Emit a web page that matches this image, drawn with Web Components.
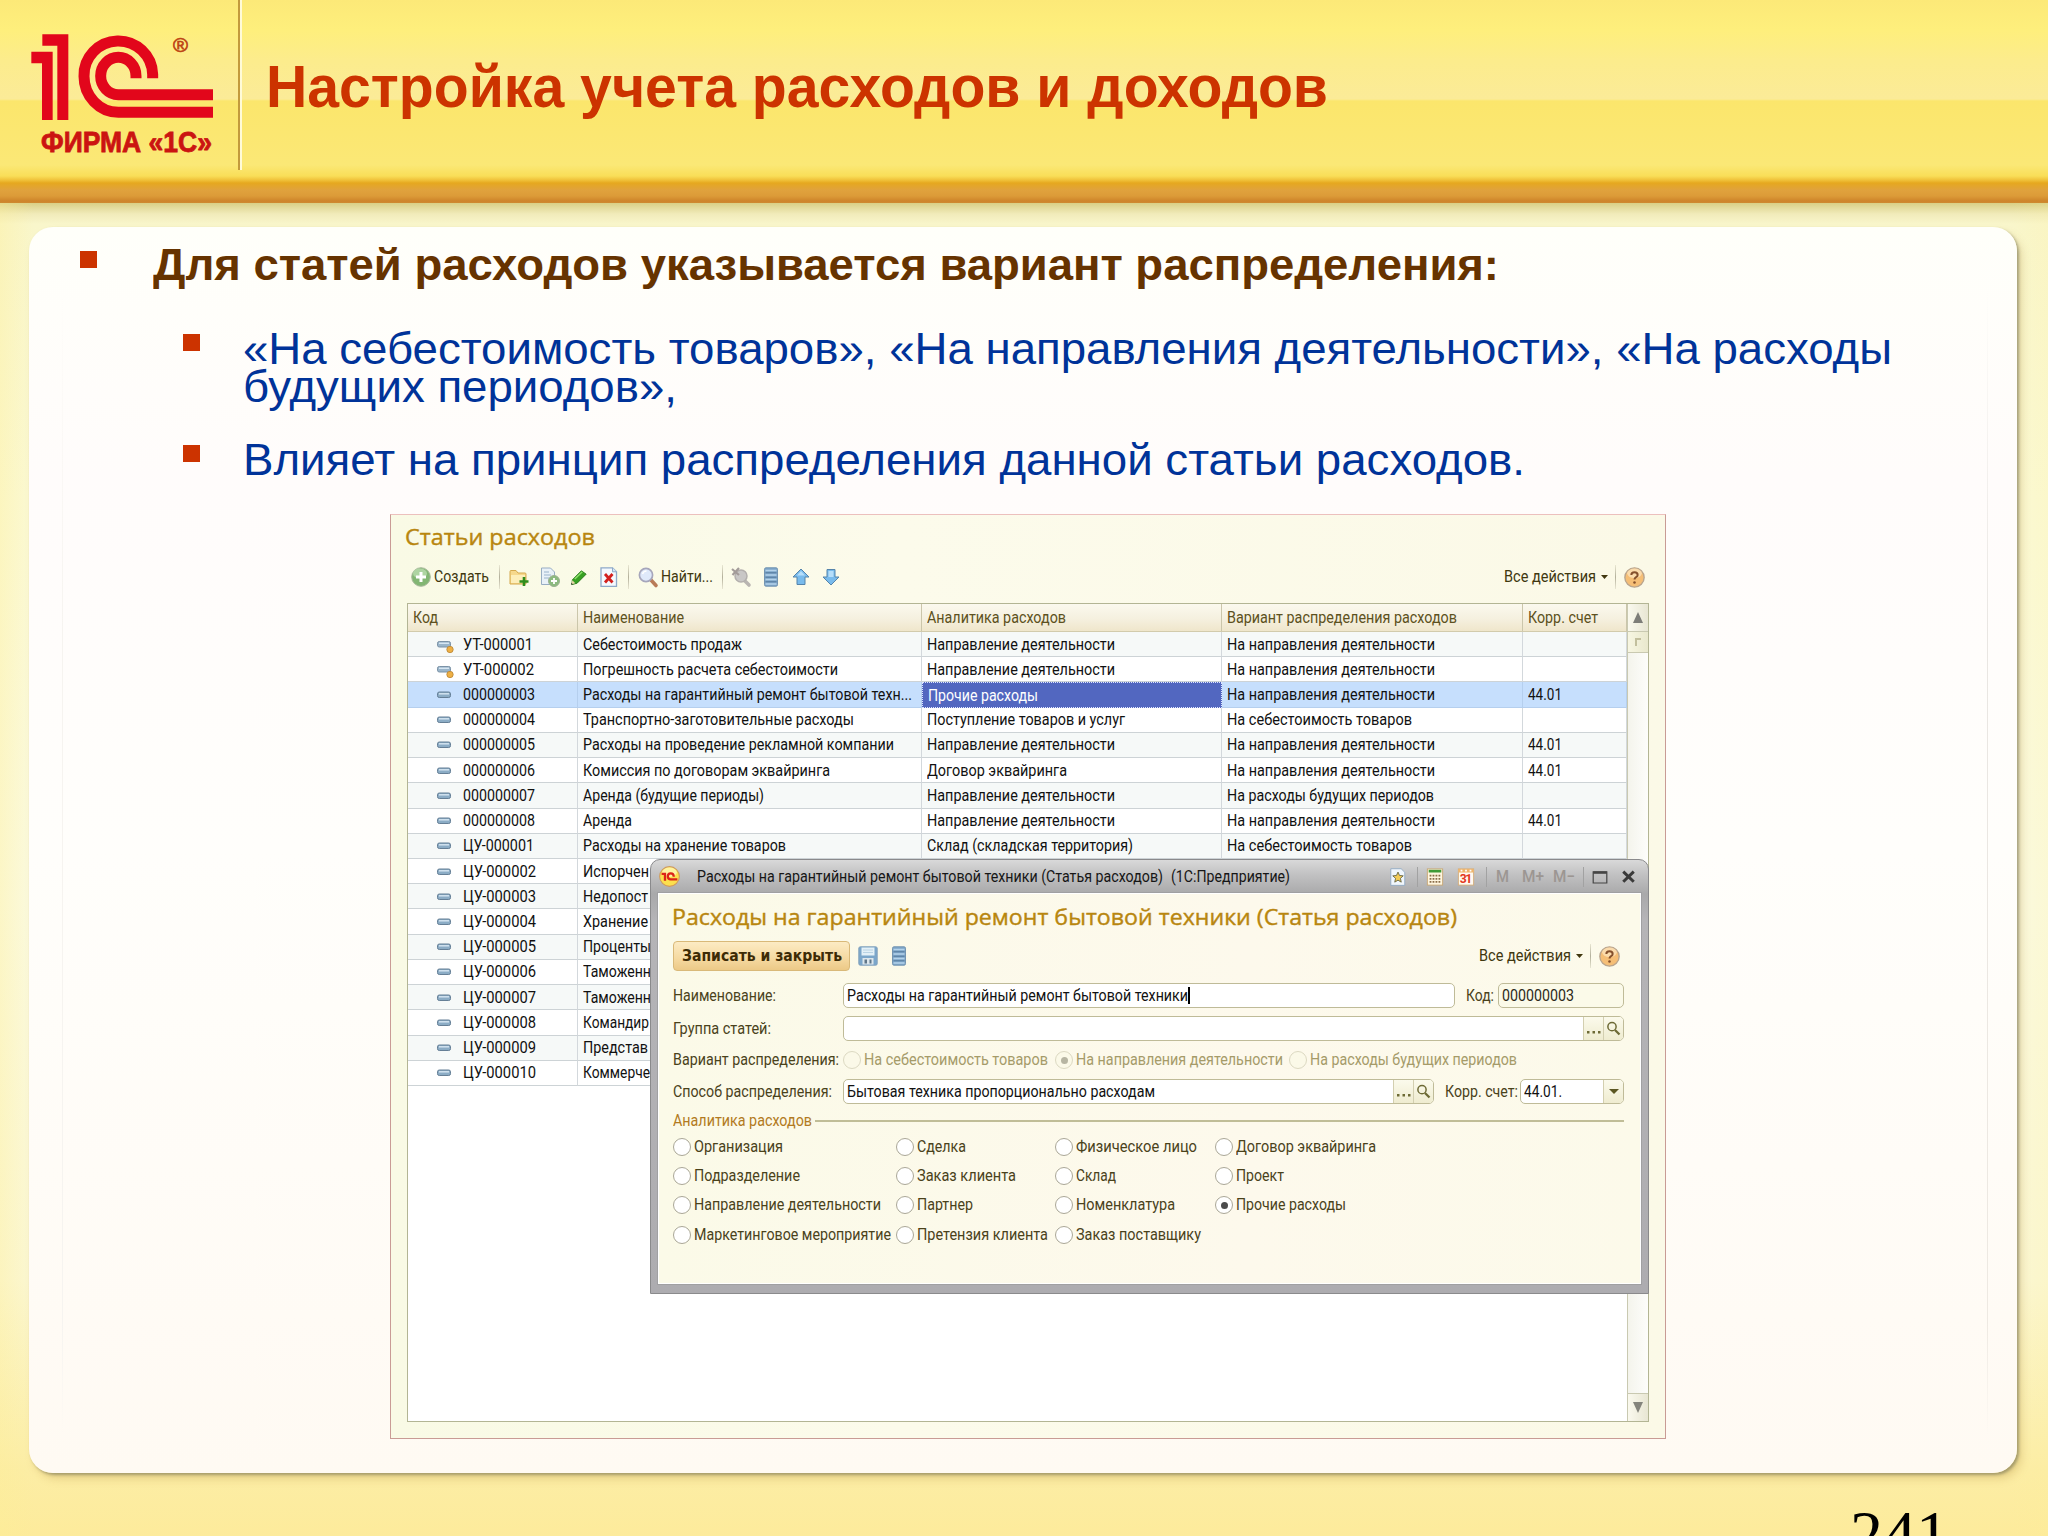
<!DOCTYPE html>
<html lang="ru">
<head>
<meta charset="utf-8">
<title>Настройка учета расходов и доходов</title>
<style>
  html, body { margin: 0; height: 1536px; overflow: hidden; }
  body { font-family: "Liberation Sans", Arial, sans-serif; }
</style>
</head>
<body>
<slide-page page="241">
  <slide-header slot="header"><fit-text w="1062">Настройка учета расходов и доходов</fit-text></slide-header>
  <slide-bullet level="1"><fit-text w="1346">Для статей расходов указывается вариант распределения:</fit-text></slide-bullet>
  <slide-bullet level="2"><fit-text w="1649">«На себестоимость товаров», «На направления деятельности», «На расходы</fit-text><br><fit-text w="434">будущих периодов»,</fit-text></slide-bullet>
  <slide-bullet level="2" last><fit-text w="1282">Влияет на принцип распределения данной статьи расходов.</fit-text></slide-bullet>
  <list-window slot="figure">
    <item-dialog></item-dialog>
  </list-window>
</slide-page>

<script>
const ICONS = {
  create: `<circle cx="10" cy="10" r="9.3" fill="#82b673" stroke="#a9b99d"/><ellipse cx="9" cy="6.5" rx="7" ry="5" fill="#b9dcae" opacity=".8"/><path d="M10 5v10M5 10h10" stroke="#fff" stroke-width="3"/>`,
  folder: `<path d="M1 4.5q0-1 1-1h5l2 2.500h7q1 0 1 1V17H1z" fill="#f6d88c" stroke="#d5a94d"/><path d="M2 8h14v8H2z" fill="#fdeeb9"/><path d="M15 10v9M10.500 14.500h9" stroke="#2f8d1c" stroke-width="2.600"/>`,
  copy: `<path d="M1.500 1h9l4 4v12.500h-13z" fill="#e9f1f8" stroke="#98adc3"/><path d="M4 5h5M4 8h7M4 11h5" stroke="#9ab3cc"/><circle cx="14" cy="14" r="5.500" fill="#8cba7f" stroke="#9bb192"/><path d="M14 11v6M11 14h6" stroke="#fff" stroke-width="1.800"/>`,
  edit: `<path d="M2.500 13L12 3.500l5 3.500-9.500 9.500-5.500 1.500z" fill="#37a022" stroke="#2b7a1c"/><path d="M5 12l8-7.500" stroke="#8fe06d" stroke-width="1.500"/><path d="M2.500 13.500l3 3-4 1.500z" fill="#e8d6a8"/><path d="M1.500 16l1.500 1.600-2 .6z" fill="#333"/>`,
  remove: `<path d="M2 .8h11.500l4 4v14.500H2z" fill="#f4f9fe" stroke="#8ea9c8" stroke-width="1.300"/><path d="M13.500.8v4h4" fill="#d5e5f4" stroke="#8ea9c8"/><path d="M6 7l7.500 8.500M13.500 7L6 15.500" stroke="#d3201d" stroke-width="2.800"/>`,
  find: `<path d="M12.500 12.500l5.500 6" stroke="#b97b58" stroke-width="3.600" stroke-linecap="round"/><circle cx="8" cy="8" r="6.600" fill="#dfe9fa" stroke="#a6a6bb" stroke-width="1.700"/><path d="M4.500 7q1-3 4-3" stroke="#fff" stroke-width="1.500" fill="none"/>`,
  clear: `<path d="M13 13l5 5" stroke="#b9b5b1" stroke-width="3.600" stroke-linecap="round"/><circle cx="10" cy="9" r="6" fill="#c9c7c6" stroke="#b3afad" stroke-width="1.500"/><path d="M1 2l7 6M8 1L1.500 8" stroke="#a39b99" stroke-width="2.200"/>`,
  list: `<rect x="3.500" y=".8" width="13" height="18.400" rx="1.500" fill="#7ea6c9" stroke="#7394b1"/><path d="M4.500 3.500h11M4.500 8h11M4.500 12.500h11M4.500 17h11" stroke="#b4d2ea" stroke-width="1.500"/><path d="M4.500 5.700h11M4.500 10.200h11M4.500 14.700h11" stroke="#577c9f" stroke-width="1.100"/>`,
  up: `<path d="M10 2l8 8h-4v7.500H6V10H2z" fill="#79bbec" stroke="#5584ab" stroke-linejoin="round"/><path d="M10 4l4 4.500H6z" fill="#b6defa"/>`,
  down: `<path d="M10 18l8-8h-4V2.500H6V10H2z" fill="#79bbec" stroke="#5584ab" stroke-linejoin="round"/><path d="M7.500 4h5v6h-5z" fill="#b6defa"/>`,
  help: `<circle cx="10" cy="10" r="9.200" fill="#f5be76" stroke="#b9a58e" stroke-width="1.300"/><ellipse cx="10" cy="6" rx="7" ry="4.500" fill="#fde2b9" opacity=".8"/><path d="M7 7.500Q7 5 10 5t3 2.500q0 1.400-1.500 2.200T10 12" stroke="#85502c" stroke-width="1.900" fill="none"/><circle cx="10" cy="14.700" r="1.200" fill="#85502c"/>`,
  save: `<rect x=".8" y=".8" width="18.400" height="18.400" rx="1.500" fill="#7ba6ca" stroke="#84a3bd"/><path d="M3.500 1.500h13v8h-13z" fill="#e3f0f7"/><path d="M5 4h10M5 6.500h10" stroke="#b9d3e4"/><path d="M4.500 12h11v6.500h-11z" fill="#dce6ec"/><path d="M6.500 13.500h2.500v4H6.500zM11.500 13.500h2v4h-2z" fill="#5f7689"/>`,
  star: `<path d="M2 .8h11.500l4 4v14.500H2z" fill="#f0f6fc" stroke="#91a9c3"/><path d="M10 4.500l1.700 3.800 4.100.4-3.100 2.800.9 4.200-3.600-2.200-3.600 2.200.9-4.200-3.100-2.800 4.100-.4z" fill="#f3cb55" stroke="#666647"/>`,
  calc: `<rect x="1.500" y="1" width="17" height="18" fill="#fff6df" stroke="#c7a673"/><path d="M3 2h14v3H3z" fill="#3f9b37"/><path d="M4 8.500h12M4 12h12M4 15.500h12" stroke="#8a6d48" stroke-width="2" stroke-dasharray="2 1.300"/>`,
  calendar: `<rect x="1.500" y="1" width="17" height="18" fill="#fffaf0" stroke="#d4ab78"/><path d="M1.500 1h17v4h-17z" fill="#efb56c"/><path d="M4 3h2M9 3h2M14 3h2" stroke="#fff" stroke-width="2"/><text x="3" y="17" font-family="Roboto, sans-serif" font-weight="700" font-size="13.500" textLength="14" fill="#e33620">31</text>`,
  max: `<path d="M1.500 3.500h17v14h-17z" fill="none" stroke="#454545" stroke-width="1.500"/><path d="M1.500 4.500h17" stroke="#454545" stroke-width="3"/>`,
  close: `<path d="M3 3.500l14 13.500M17 3.500L3 17" stroke="#3a3a3a" stroke-width="4"/>`,
  loupe: `<circle cx="8" cy="7.500" r="5.500" fill="none" stroke="#6d6a35" stroke-width="2"/><path d="M12 12l6 6" stroke="#6d6a35" stroke-width="3"/>`,
  item: `<rect x="3.500" y="7" width="13" height="5.500" rx="1.800" fill="#8bacc5" stroke="#657f96"/><path d="M5 8.800h10" stroke="#d6e6f2" stroke-width="1.400"/>`,
  predefined: `<rect x="3.500" y="6.500" width="13" height="5.500" rx="1.800" fill="#9ab5ca" stroke="#7b92a6"/><path d="M5 8.300h10" stroke="#d6e6f2" stroke-width="1.400"/><circle cx="16" cy="14.500" r="3.200" fill="#eeb045" stroke="#b98432" stroke-width=".8"/>`,
  app: `<circle cx="10" cy="10" r="9.400" fill="#fcdf4d" stroke="#cf9a5d"/><ellipse cx="10" cy="6" rx="7" ry="4.500" fill="#fff3a0"/><path d="M2.500 7.500H5.700V14M14 10.200V9.700A2.800 2.800 0 1 0 11.300 12.700H17.500" fill="none" stroke="#dc2418" stroke-width="2.200"/>`
};

// [code, name, analytics, distribution, account], every text with its drawn width
const DIRECTION = ["Направление деятельности", 188];
const TO_DIRECTIONS = ["На направления деятельности", 208];
const TO_COST = ["На себестоимость товаров", 185];
const ACCOUNT = ["44.01", 34];
const ROWS = [
  [["УТ-000001", 70], ["Себестоимость продаж", 159], DIRECTION, TO_DIRECTIONS],
  [["УТ-000002", 71], ["Погрешность расчета себестоимости", 255], DIRECTION, TO_DIRECTIONS],
  [["000000003", 72], ["Расходы на гарантийный ремонт бытовой техн...", 329], ["Прочие расходы", 110], TO_DIRECTIONS, ACCOUNT],
  [["000000004", 72], ["Транспортно-заготовительные расходы", 271], ["Поступление товаров и услуг", 198], TO_COST],
  [["000000005", 72], ["Расходы на проведение рекламной компании", 311], DIRECTION, TO_DIRECTIONS, ACCOUNT],
  [["000000006", 72], ["Комиссия по договорам эквайринга", 247], ["Договор эквайринга", 140], TO_DIRECTIONS, ACCOUNT],
  [["000000007", 72], ["Аренда (будущие периоды)", 181], DIRECTION, ["На расходы будущих периодов", 207]],
  [["000000008", 72], ["Аренда", 49], DIRECTION, TO_DIRECTIONS, ACCOUNT],
  [["ЦУ-000001", 71], ["Расходы на хранение товаров", 203], ["Склад (складская территория)", 206], TO_COST],
  [["ЦУ-000002", 73], ["Испорчен", 66]],
  [["ЦУ-000003", 73], ["Недопост", 65]],
  [["ЦУ-000004", 73], ["Хранение", 65]],
  [["ЦУ-000005", 73], ["Проценты", 68]],
  [["ЦУ-000006", 73], ["Таможенн", 68]],
  [["ЦУ-000007", 73], ["Таможенн", 68]],
  [["ЦУ-000008", 73], ["Командир", 66]],
  [["ЦУ-000009", 73], ["Представ", 65]],
  [["ЦУ-000010", 73], ["Коммерче", 67]]
];

const fit = (cell) => cell ? `<fit-text w="${cell[1]}">${cell[0]}</fit-text>` : "";

class BaseElement extends HTMLElement {
  constructor() {
    super();
    this.attachShadow({ mode: "open" });
  }

  connectedCallback() {
    this.shadowRoot.innerHTML = `<style>* { box-sizing: border-box; } ${this.styles()}</style>${this.markup()}`;
  }

  styles() {
    return "";
  }

  markup() {
    return "<slot></slot>";
  }
}

// one line of text squeezed or stretched to the width in "w"
class FitText extends BaseElement {
  connectedCallback() {
    super.connectedCallback();
    const width = Number(this.getAttribute("w"));
    const line = this.shadowRoot.querySelector("span");
    const natural = line.getBoundingClientRect().width;

    if (width && natural) {
      this.style.width = `${width}px`;
      line.style.transform = `scaleX(${width / natural})`;
    }
  }

  styles() {
    return `
      :host { display: inline-block; flex: none; white-space: nowrap; vertical-align: top; }
      span { display: inline-block; transform-origin: 0 50%; vertical-align: top; }
    `;
  }

  markup() {
    return "<span><slot></slot></span>";
  }
}

class UiIcon extends BaseElement {
  styles() {
    return `
      :host { display: block; flex: none; width: 20px; height: 20px; }
      svg { display: block; width: 100%; height: 100%; overflow: visible; }
    `;
  }

  markup() {
    return `<svg viewBox="0 0 20 20" fill="none" aria-hidden="true">${ICONS[this.getAttribute("name")]}</svg>`;
  }
}

class UiSeparator extends BaseElement {
  styles() {
    return `:host { display: block; flex: none; width: 1px; height: 24px; background: linear-gradient(#e8e6d2, #b3b09b, #e8e6d2); }`;
  }
}

class SlidePage extends BaseElement {
  styles() {
    return `
      :host {
        display: flex;
        flex-direction: column;
        width: 2048px;
        height: 1536px;
        overflow: hidden;
        background:
          linear-gradient(90deg, rgba(253, 238, 150, .35), rgba(253, 238, 150, 0) 34px, rgba(253, 238, 150, 0) 2010px, rgba(253, 238, 150, .15)),
          linear-gradient(#d9cf85 203px, #f1ebba 214px, #f9f6cb 224px, #fbf9d4 500px, #fbfae0 900px, #fbf7d3 1280px, #fceda5 1470px, #fdeb9b 1536px);
      }
      main {
        display: flex;
        flex-direction: column;
        width: 1988px;
        height: 1246px;
        flex: none;
        margin: 24px 0 0 29px;
        padding: 19px 0 0;
        border-radius: 24px;
        background:
          linear-gradient(transparent, #e9e6e2 30%, #eee9e2 90%, transparent) 1958px 60px / 1px 1150px no-repeat,
          linear-gradient(transparent, #f6f4f0 30%, #f6f4f0 90%, transparent) 33px 60px / 1px 1150px no-repeat,
          linear-gradient(#fffffa, #fffcfb 20%, #fffefb 50%, #fffaf3);
        box-shadow: 2px 2px 3px rgba(110, 110, 80, .55), 5px 6px 9px rgba(180, 140, 60, .28);
      }
      ::slotted([slot="figure"]) { margin: 35px 0 0 361px; }
      footer {
        margin: 28px 0 0 1850px;
        font: 66px/66px "Liberation Serif", "Times New Roman", serif;
        color: #000;
      }
    `;
  }

  markup() {
    return `
      <slot name="header"></slot>
      <main><slot></slot><slot name="figure"></slot></main>
      <footer>${this.getAttribute("page")}</footer>
    `;
  }
}

class SlideHeader extends BaseElement {
  styles() {
    return `
      :host {
        display: flex;
        flex: none;
        height: 203px;
        background: linear-gradient(#fce978, #feef7c 30px, #fcec8c 60px, #fbeb98 99px, #fbe66c 101px, #fbe876 165px, #f9de58 176px, #f0c23a 180px, #e6a81f 183px, #e0a23d 190px, #dc9b38 196px, #ce842a 201px, #cf8a30 203px);
      }
      .logo {
        display: flex;
        flex-direction: column;
        width: 238px;
        height: 170px;
      }
      svg { display: block; width: 238px; height: 128px; }
      .firm {
        padding-left: 41px;
        font: bold 29px/29px "Liberation Sans", Arial, sans-serif;
        color: #cb1411;
        -webkit-text-stroke: .8px #cb1411;
      }
      .rule { width: 4px; height: 170px; background: linear-gradient(90deg, #c39a3c 0 2px, #fffbd8 2px); }
      h1 {
        margin: 57px 0 0 24px;
        font: bold 59px/60px "Liberation Sans", Arial, sans-serif;
        color: #cc3300;
      }
    `;
  }

  markup() {
    return `
      <div class="logo">
        <svg viewBox="0 0 714 384" aria-label="1С">
          <path fill="#e2061b" d="M127 103h78v257h-33V137h-45zM94 155h64v205h-32V190H94z"/>
          <path fill="none" stroke="#e2061b" stroke-width="33" d="M458 235V223A103 103 0 0 0 252 229A103 108 0 0 0 355 337H639M408 235V228A53 56 0 0 0 302 228A53 56 0 0 0 355 284H639"/>
          <text x="519" y="157" font-family="Liberation Sans, sans-serif" font-size="61" fill="#bd4414" stroke="#bd4414" stroke-width="2">®</text>
        </svg>
        <div class="firm"><fit-text w="171">ФИРМА «1С»</fit-text></div>
      </div>
      <div class="rule"></div>
      <h1><slot></slot></h1>
    `;
  }
}

class SlideBullet extends BaseElement {
  styles() {
    return `
      :host {
        display: grid;
        grid-template-columns: 73px 1fr;
        margin: 0 0 46px 51px;
        font: bold 45px/38px "Liberation Sans", Arial, sans-serif;
        color: #663300;
      }
      :host([level="2"]) {
        grid-template-columns: 60px 1fr;
        margin: 0 0 35px 154px;
        font-weight: normal;
        color: #003399;
      }
      :host([last]) { margin-bottom: 0; }
      i { width: 17px; height: 17px; margin-top: 5px; background: #cc3300; }
      :host([level="2"]) i { margin-top: 4px; }
    `;
  }

  markup() {
    return `<i></i><div><slot></slot></div>`;
  }
}

class ListRow extends BaseElement {
  set cells(value) {
    this._cells = value;
  }

  styles() {
    return `
      :host {
        display: grid;
        grid-template-columns: 170px 344px 300px 301px 104px;
        height: 25.22px;
        color: #111;
      }
      :host(:nth-child(odd)) { background: #f6f9f8; }
      div {
        display: flex;
        align-items: center;
        padding: 1px 0 0 5px;
        overflow: hidden;
        border-right: 1px solid #d3d8dc;
        border-bottom: 1px solid #cdd3d6;
      }
      div:first-of-type { padding-left: 26px; }
      ui-icon { margin-right: 9px; }
      :host([selected]) { background: #c6dffd; }
      :host([selected]) div { border-color: #b5cfee; }
      :host([selected]) div:nth-of-type(3) {
        padding-left: 5px;
        background: #5267c0;
        border: 1px dotted #dfe6ff;
        color: #fff;
      }
    `;
  }

  markup() {
    const icon = this.hasAttribute("predefined") ? "predefined" : "item";
    return [0, 1, 2, 3, 4].map((index) => `
      <div>${index === 0 ? `<ui-icon name="${icon}"></ui-icon>` : ""}${fit(this._cells[index])}</div>
    `).join("");
  }
}

class ListTable extends BaseElement {
  connectedCallback() {
    super.connectedCallback();
    const body = this.shadowRoot.querySelector(".body");

    ROWS.forEach((cells, index) => {
      const row = document.createElement("list-row");
      row.cells = cells;
      row.toggleAttribute("selected", index === 2);
      row.toggleAttribute("predefined", index < 2);
      body.append(row);
    });
  }

  styles() {
    return `
      :host {
        display: grid;
        grid-template-columns: 1219px 1fr;
        width: 1242px;
        height: 819px;
        background: #fff;
        border: 1px solid #b3b594;
      }
      .head {
        display: grid;
        grid-template-columns: 170px 344px 300px 301px 104px;
        height: 28px;
        color: #5d5120;
        background: linear-gradient(#fbf9ee, #f5f0df 55%, #efe6cb);
        border-bottom: 1px solid #d2cbac;
      }
      .head div { display: flex; align-items: center; padding: 1px 0 0 5px; border-right: 1px solid #cbc6ab; }
      .bar {
        display: flex;
        flex-direction: column;
        justify-content: space-between;
        border-left: 1px solid #c9c9b1;
        background: linear-gradient(90deg, #f4f4ec, #fdfdfb);
      }
      .btn {
        display: flex;
        align-items: center;
        justify-content: center;
        height: 28px;
        background: linear-gradient(90deg, #faf9ee, #e8e6d3);
        border-bottom: 1px solid #c9c9b1;
      }
      .btn.end { border: 0; border-top: 1px solid #c9c9b1; }
      .thumb { height: 21px; background: linear-gradient(90deg, #f7f6e2, #e9e8cd); }
    `;
  }

  markup() {
    return `
      <div>
        <div class="head">
          <div>${fit(["Код", 25])}</div>
          <div>${fit(["Наименование", 101])}</div>
          <div>${fit(["Аналитика расходов", 139])}</div>
          <div>${fit(["Вариант распределения расходов", 230])}</div>
          <div>${fit(["Корр. счет", 70])}</div>
        </div>
        <div class="body"></div>
      </div>
      <div class="bar">
        <div>
          <div class="btn"><svg width="10" height="11"><path d="M5 0l5 11H0z" fill="#7d7d78"/></svg></div>
          <div class="btn thumb"><svg width="6" height="8"><path d="M1 8V1h5" fill="none" stroke="#c2bf9d" stroke-width="2"/></svg></div>
        </div>
        <div class="btn end"><svg width="10" height="11"><path d="M5 11L10 0H0z" fill="#84847c"/></svg></div>
      </div>
    `;
  }
}

// "Все действия" menu link with the help button
class AllActions extends BaseElement {
  styles() {
    return `
      :host { display: flex; align-items: center; margin-left: auto; color: #40370f; }
      svg { margin: 0 7px 0 5px; }
      ui-icon { width: 21px; height: 21px; margin-left: 8px; }
    `;
  }

  markup() {
    return `
      ${fit(["Все действия", 92])}
      <svg width="7" height="4"><path d="M0 0h7L3.500 4z" fill="#40370f"/></svg>
      <ui-separator></ui-separator>
      <ui-icon name="help"></ui-icon>
    `;
  }
}

class ListWindow extends BaseElement {
  styles() {
    return `
      :host {
        display: block;
        position: relative;
        width: 1276px;
        height: 925px;
        padding: 0 0 0 16px;
        box-sizing: border-box;
        font: 16.5px/20px Roboto, sans-serif;
        border: 1px solid #c99b95;
        border-top-color: #ecc0bd;
        background: linear-gradient(90deg, #f9fae5, #fcfbeb 40%, #fbf9e7);
      }
      h2 { margin: 0 0 0 -2px; padding-top: 10px; font: 22.5px/24px "Open Sans", sans-serif; color: #b8860f; -webkit-text-stroke: .4px #b8860f; }
      .tools {
        display: flex;
        align-items: center;
        height: 32px;
        margin: 12px 20px 10px 4px;
        color: #40370f;
      }
      .tools > fit-text { margin-left: 3px; margin-right: 1px; }
    `;
  }

  markup() {
    return `
      <h2>${fit(["Статьи расходов", 190])}</h2>
      <div class="tools">
        <ui-icon name="create"></ui-icon>${fit(["Создать", 55])}
        <ui-separator style="margin: 0 9px"></ui-separator>
        <ui-icon name="folder"></ui-icon>
        <ui-icon name="copy" style="margin-left: 11px"></ui-icon>
        <ui-icon name="edit" style="margin-left: 10px; width: 19px"></ui-icon>
        <ui-icon name="remove" style="margin-left: 10px"></ui-icon>
        <ui-separator style="margin: 0 9px"></ui-separator>
        <ui-icon name="find"></ui-icon>${fit(["Найти...", 52])}
        <ui-separator style="margin: 0 8px"></ui-separator>
        <ui-icon name="clear"></ui-icon>
        <ui-icon name="list" style="margin-left: 10px"></ui-icon>
        <ui-icon name="up" style="margin-left: 10px"></ui-icon>
        <ui-icon name="down" style="margin-left: 10px"></ui-icon>
        <all-actions></all-actions>
      </div>
      <list-table></list-table>
      <slot></slot>
    `;
  }
}

class UiRadio extends BaseElement {
  styles() {
    return `
      :host { display: flex; align-items: center; gap: 3px; color: #4a421b; }
      i {
        display: grid;
        place-items: center;
        width: 18px;
        height: 18px;
        border: 1.5px solid #aaa797;
        border-radius: 50%;
        background: #fff;
      }
      :host([checked]) i::before { content: ""; width: 7px; height: 7px; border-radius: 50%; background: #4c4c4c; }
      :host([disabled]) { color: #a59b69; }
      :host([disabled]) i { border-color: #dcd9c2; background: #fbf9e8; }
      :host([disabled][checked]) i::before { background: #b7b5a2; }
    `;
  }

  markup() {
    return `<i></i>${fit([this.getAttribute("label"), this.getAttribute("w")])}`;
  }
}

// text box; "buttons" lists what stands at its right end
class UiField extends BaseElement {
  styles() {
    return `
      :host {
        display: flex;
        height: 25px;
        box-sizing: border-box;
        overflow: hidden;
        border: 1.5px solid #bfbb98;
        border-radius: 5px;
        background: #fff;
        color: #111;
      }
      :host([readonly]) { background: #fbfae9; color: #2d2a1a; }
      .value { display: flex; align-items: center; flex: 1; padding-left: 3px; }
      :host([caret]) .value::after { content: ""; width: 1.5px; height: 17px; background: #000; }
      b {
        display: grid;
        place-items: center;
        width: 20px;
        border-left: 1px solid #d3cfb0;
        background: linear-gradient(#fbfaec, #efecd0);
      }
      ui-icon { width: 15px; height: 15px; }
    `;
  }

  markup() {
    const parts = {
      dots: `<svg width="15" height="12"><path d="M1 8h2.500v2.500H1zM6.500 8H9v2.500H6.500zM12 8h2.500v2.500H12z" fill="#6d6a35"/></svg>`,
      loupe: `<ui-icon name="loupe"></ui-icon>`,
      drop: `<svg width="10" height="5"><path d="M0 0h10L5 5z" fill="#5b5722"/></svg>`
    };
    const buttons = (this.getAttribute("buttons") || "").split(" ").filter(Boolean);
    return `
      <div class="value"><slot></slot></div>
      ${buttons.map((name) => `<b>${parts[name]}</b>`).join("")}
    `;
  }
}

class ItemDialog extends BaseElement {
  styles() {
    return `
      :host {
        display: block;
        position: absolute;
        left: 259px;
        top: 344px;
        width: 999px;
        height: 435px;
        box-sizing: border-box;
        padding: 0 7px 8px;
        border: 1.5px solid #8a8a8c;
        border-radius: 10px 10px 0 0;
        background: linear-gradient(#d9d9d9, #c2c2c3 14px, #a9a9aa 34px, #b5b4b7 60px, #adacb0);
      }
      header { display: flex; align-items: center; height: 33px; color: #161616; }
      header ui-icon { width: 18px; height: 18px; }
      header ui-separator { height: 20px; background: #a2a2a2; }
      .mem { color: #9c9692; font-weight: 500; }
      .icons { display: flex; align-items: center; margin-left: auto; }
      section {
        height: 391px;
        padding: 0 16px 0 14px;
        border: 1px solid #fff;
        background: linear-gradient(90deg, #fbfae8, #fdf9ec 60%, #fcfaea);
        color: #4a421b;
        outline: 1px solid #a0a0a2;
      }
      h2 { margin: 0 0 0 -1px; padding-top: 10px; height: 44px; font: 22.5px/26px "Open Sans", sans-serif; color: #b8860f; -webkit-text-stroke: .4px #b8860f; }
      .tools { display: flex; align-items: center; height: 36px; }
      .submit {
        display: flex;
        align-items: center;
        justify-content: center;
        width: 177px;
        height: 30px;
        border: 1.5px solid #d9b979;
        border-radius: 4px;
        background: linear-gradient(#fcebc4, #f5d9a0 60%, #ecc987);
        font-family: "DejaVu Sans", sans-serif;
        font-size: 15px;
        font-weight: bold;
        color: #3d2b05;
      }
      .row { display: flex; align-items: center; height: 25px; }
      .label { flex: none; width: 170px; }
      .group { display: flex; align-items: center; gap: 3px; height: 20px; margin-top: 7px; color: #b27a22; }
      .group::after { content: ""; flex: 1; height: 1.5px; background: #c0bd97; }
      .choices {
        display: grid;
        grid-template-columns: 223px 159px 160px 1fr;
        grid-auto-rows: 29.3px;
        margin-top: 1px;
      }
    `;
  }

  markup() {
    const choices = [
      ["Организация", 89], ["Сделка", 49], ["Физическое лицо", 121], ["Договор эквайринга", 140],
      ["Подразделение", 106], ["Заказ клиента", 99], ["Склад", 40], ["Проект", 48],
      ["Направление деятельности", 187], ["Партнер", 56], ["Номенклатура", 99], ["Прочие расходы", 110],
      ["Маркетинговое мероприятие", 197], ["Претензия клиента", 131], ["Заказ поставщику", 125]
    ];

    return `
      <header>
        <ui-icon name="app" style="width: 21px; height: 21px; margin-left: 1px"></ui-icon>
        <span style="margin-left: 17px">${fit(["Расходы на гарантийный ремонт бытовой техники (Статья расходов)", 466])}</span>
        <span style="margin-left: 8px">${fit(["(1С:Предприятие)", 119])}</span>
        <div class="icons">
          <ui-icon name="star"></ui-icon>
          <ui-separator style="margin: 0 8px 0 10px"></ui-separator>
          <ui-icon name="calc"></ui-icon>
          <ui-icon name="calendar" style="margin-left: 13px"></ui-icon>
          <ui-separator style="margin: 0 9px 0 11px"></ui-separator>
          <span class="mem">${fit(["M", 13])}</span>
          <span class="mem" style="margin-left: 13px">${fit(["M+", 22])}</span>
          <span class="mem" style="margin-left: 9px">${fit(["M−", 22])}</span>
          <ui-separator style="margin: 0 8px"></ui-separator>
          <ui-icon name="max" style="width: 16px; height: 16px"></ui-icon>
          <ui-icon name="close" style="width: 15px; height: 15px; margin: 0 5px 0 13px"></ui-icon>
        </div>
      </header>
      <section>
        <h2>${fit(["Расходы на гарантийный ремонт бытовой техники (Статья расходов)", 785])}</h2>
        <div class="tools">
          <div class="submit">${fit(["Записать и закрыть", 160])}</div>
          <ui-icon name="save" style="margin-left: 8px"></ui-icon>
          <ui-icon name="list" style="margin-left: 11px"></ui-icon>
          <all-actions style="margin-right: 4px"></all-actions>
        </div>
        <div class="row" style="margin-top: 9px">
          <span class="label">${fit(["Наименование:", 103])}</span>
          <ui-field style="width: 612px" caret>${fit(["Расходы на гарантийный ремонт бытовой техники", 341])}</ui-field>
          <span style="margin: 0 4px 0 11px">${fit(["Код:", 28])}</span>
          <ui-field style="flex: 1" readonly>${fit(["000000003", 72])}</ui-field>
        </div>
        <div class="row" style="margin-top: 8px">
          <span class="label">${fit(["Группа статей:", 98])}</span>
          <ui-field style="flex: 1" buttons="dots loupe"></ui-field>
        </div>
        <div class="row" style="height: 20px; margin-top: 9px">
          <span class="label">${fit(["Вариант распределения:", 166])}</span>
          <ui-radio disabled label="На себестоимость товаров" w="184"></ui-radio>
          <ui-radio disabled checked label="На направления деятельности" w="207" style="margin-left: 7px"></ui-radio>
          <ui-radio disabled label="На расходы будущих периодов" w="207" style="margin-left: 6px"></ui-radio>
        </div>
        <div class="row" style="margin-top: 9px">
          <span class="label">${fit(["Способ распределения:", 159])}</span>
          <ui-field style="width: 591px" buttons="dots loupe">${fit(["Бытовая техника пропорционально расходам", 308])}</ui-field>
          <span style="margin: 0 2px 0 11px">${fit(["Корр. счет:", 73])}</span>
          <ui-field style="flex: 1" buttons="drop">${fit(["44.01.", 38])}</ui-field>
        </div>
        <div class="group">${fit(["Аналитика расходов", 139])}</div>
        <div class="choices">
          ${choices.map(([label, width]) => `<ui-radio label="${label}" w="${width}"${label === "Прочие расходы" ? " checked" : ""}></ui-radio>`).join("")}
        </div>
      </section>
    `;
  }
}

customElements.define("slide-page", SlidePage);
customElements.define("slide-header", SlideHeader);
customElements.define("slide-bullet", SlideBullet);
customElements.define("list-row", ListRow);
customElements.define("list-table", ListTable);
customElements.define("list-window", ListWindow);
customElements.define("item-dialog", ItemDialog);
customElements.define("all-actions", AllActions);
customElements.define("ui-radio", UiRadio);
customElements.define("ui-field", UiField);
customElements.define("ui-icon", UiIcon);
customElements.define("ui-separator", UiSeparator);
// last, so that every host around a text already gives it its font when it is measured
customElements.define("fit-text", FitText);
</script>
</body>
</html>
